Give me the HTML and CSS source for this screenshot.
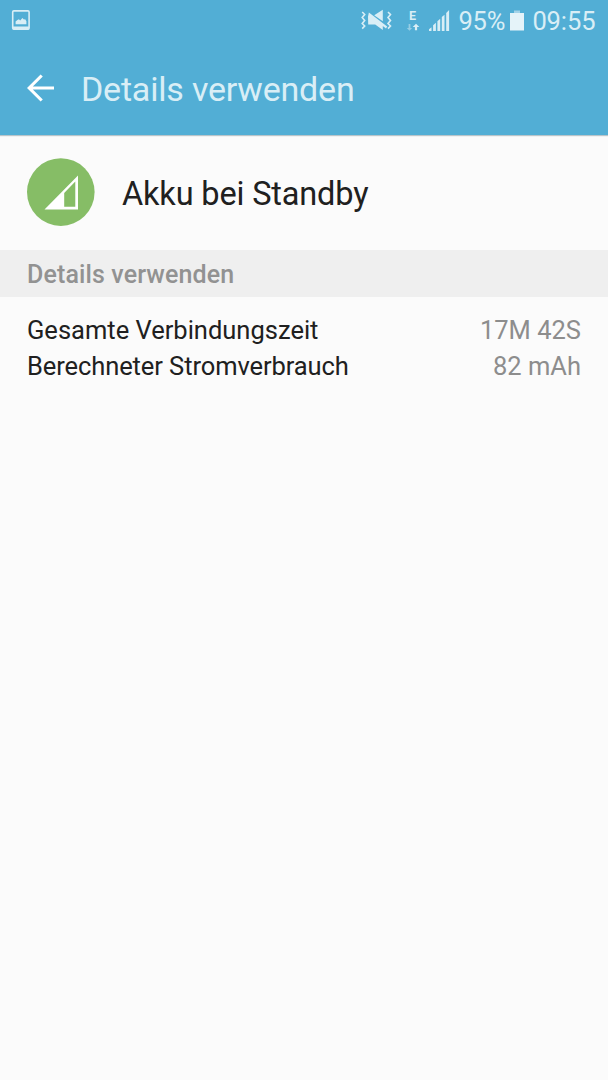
FILE: index.html
```html
<!DOCTYPE html>
<html lang="de">
<head>
<meta charset="utf-8">
<title>Details verwenden</title>
<link rel="stylesheet" href="styles.css">
</head>
<body>
<header class="top">
  <div class="status">
    <svg class="status-image" width="20" height="22" viewBox="0 0 20 22"><rect x="1.7" y="1.9" width="16.4" height="18.2" rx="1.2" fill="none" stroke="currentColor" stroke-width="1.6"/><path fill="currentColor" d="M2 17.6h16v2.8H2zM4.6 15.2v-2.6l1.8-1.5 1.5-.9 1.3 1.2L11.4 9l1.5 1.6 1.3-.3 1.2 2v2.9z"/></svg>
    <div class="status-right">
      <svg class="signals" width="92" height="26" viewBox="0 0 92 26">
        <g fill="none" stroke="currentColor" stroke-width="1.6"><path d="M2.2 4l2.5 2.5-2.5 3 2.5 3-2.5 3 2.5 2.5-2.5 2.6"/><path d="M28 4l2.5 2.5-2.5 3 2.5 3-2.5 3 2.5 2.5-2.5 2.6"/></g>
        <path fill="currentColor" d="M14.2 7.2L22.8 1.8v11.4zM8 8.5L8.9 4.4 27.2 18.6 26 20.4l-3.2-2.5V22l-7.6-5.6H8.2z"/>
        <path fill="currentColor" opacity=".5" d="M48.6 16h1.8v4h1.8L49.5 22.8 46.8 20h1.8z"/>
        <path fill="currentColor" d="M54.9 22.3v-3.4h-2.2l3.3-3.2 3.3 3.2h-2.2v3.4z"/>
        <path fill="currentColor" d="M69 23v-1.8l2.5-1.9V23zM73.1 23v-5.8l2.8-2.5V23zM77.4 23v-9.8l2.8-2.5V23zM81.8 23V9.1l2.7-2.4V23zM86.2 23V5l2.9-3v21z"/>
        <text class="network-type" x="49" y="12">E</text>
      </svg>
      <span class="percent">95%</span>
      <svg class="battery" width="14" height="22" viewBox="0 0 14 22"><path fill="currentColor" d="M0 3h14v17.5H0z"/><path fill="currentColor" opacity=".55" d="M4 .5h6V3H4z"/></svg>
      <span class="clock">09:55</span>
    </div>
  </div>
  <div class="bar">
    <svg class="back" width="28" height="28" viewBox="0 0 28 28"><path fill="none" stroke="#fff" stroke-width="3.1" d="M14.7 1.5L2.2 14l12.5 12.5M2.5 14H27"/></svg>
    <h1 class="title">Details verwenden</h1>
  </div>
</header>
<main>
  <section class="item">
    <svg width="68" height="68" viewBox="0 0 68 68"><circle cx="33.8" cy="34.1" r="33.8" fill="#86bd66"/><path fill="#fff" fill-rule="evenodd" d="M14.5 51.5L48 17.5v34zM34.2 35L45.3 23.5v25.3H34.2z" transform="translate(3 0)"/></svg>
    <span class="item-name">Akku bei Standby</span>
  </section>
  <h2 class="section-title">Details verwenden</h2>
  <dl class="details">
    <div class="row"><dt>Gesamte Verbindungszeit</dt><dd>17M 42S</dd></div>
    <div class="row"><dt class="consumption">Berechneter Stromverbrauch</dt><dd>82 mAh</dd></div>
  </dl>
</main>
</body>
</html>
```
FILE: styles.css
```css
* { box-sizing: border-box; }
body { margin: 0; min-height: 1080px; background: #fbfbfb; color: #202020; font-family: Roboto, sans-serif; }
svg { display: block; flex: none; }
.top { height: 135px; background: #52aed5; color: #d9eef6; box-shadow: 0 1px 1px #b9c5ca; }
.status { height: 42px; display: flex; justify-content: space-between; padding: 0 12.6px 0 11px; }
.status-image { margin-top: 9px; }
.status-right { display: flex; font-size: 25.5px; line-height: 42px; white-space: nowrap; }
.signals { margin: 8px 6px 0 0; }
.network-type { font: 700 12.5px Roboto, sans-serif; fill: currentColor; }
.percent { width: 46px; margin-right: 6px; letter-spacing: -.2px; }
.battery { margin: 10px 8px 0 0; color: #e5f3f9; }
.clock { letter-spacing: -.1px; }
.bar { height: 93px; padding-left: 27px; display: flex; align-items: center; }
.back { margin: 0 26px 2px 0; }
.title { margin: 0; font-size: 34px; font-weight: 400; line-height: 40px; letter-spacing: -.2px; }
.item { height: 115px; padding: 0 27px 1px; display: flex; align-items: center; gap: 27px; font-size: 32.5px; letter-spacing: -.16px; }
.item-name { margin-top: 4px; }
.section-title { height: 47px; margin: 0; padding-left: 27px; background: #efefef; color: #929292; font-size: 25px; font-weight: 500; line-height: 49px; letter-spacing: .12px; }
.details { margin: 0; padding: 15px 27px; font-size: 25.5px; line-height: 36px; }
.row { display: flex; justify-content: space-between; }
.consumption { letter-spacing: -.09px; }
dd { margin: 0; color: #8d8d8d; }
```
